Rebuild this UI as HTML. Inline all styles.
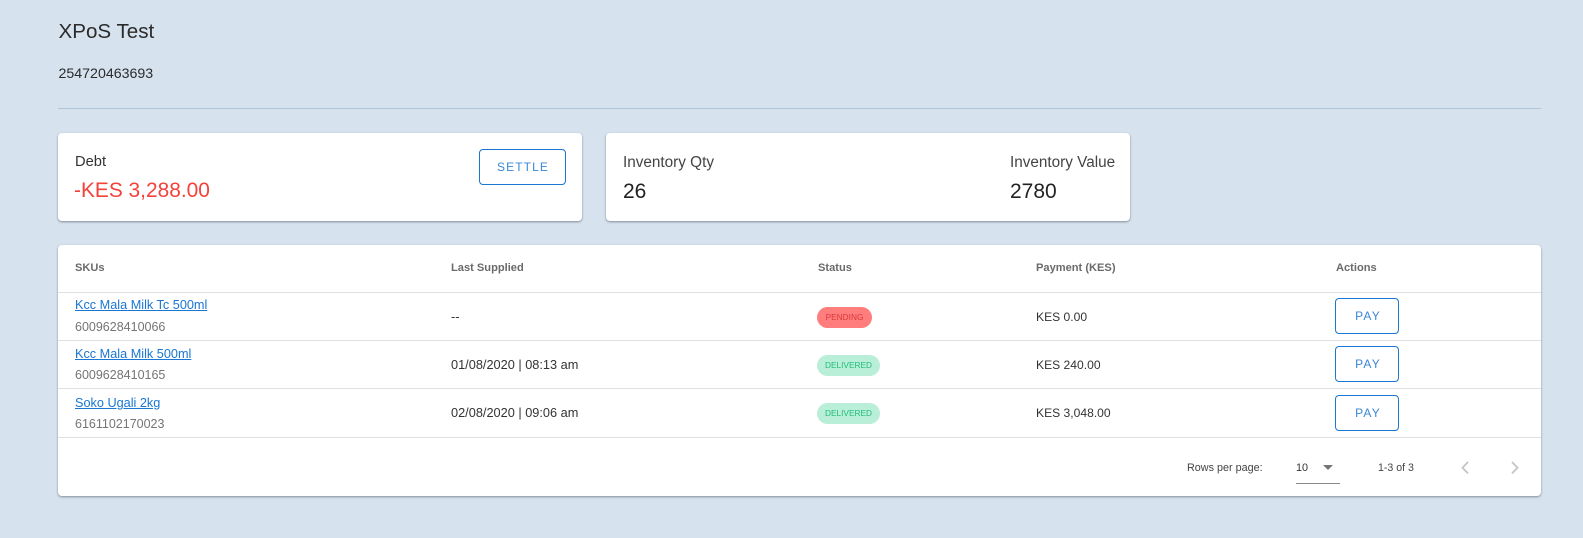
<!DOCTYPE html>
<html>
<head>
<meta charset="utf-8">
<style>
html,body{margin:0;padding:0;width:1583px;height:538px;overflow:hidden;background:#d6e2ee;font-family:"Liberation Sans",sans-serif;}
.t{position:absolute;white-space:nowrap;line-height:1;}
.card{position:absolute;background:#fff;border-radius:4px;box-shadow:0 1px 2px rgba(60,70,85,.55);}
.btn{position:absolute;box-sizing:border-box;border:1px solid #1976d2;border-radius:4px;color:#3a87d6;font-size:12px;letter-spacing:1.2px;text-align:center;background:#fff;}
.hr{position:absolute;left:58px;width:1483px;height:1px;background:#e0e0e0;}
.h{font-size:11.1px;font-weight:bold;color:#6a6a6a;top:263px;}
.lnk{font-size:12.7px;color:#1976d2;text-decoration:underline;left:75px;}
.sku{font-size:12.5px;color:#757575;left:75px;}
.c{font-size:12.75px;color:#333;}
.k{font-size:12.1px;color:#333;left:1036px;}
.pill{position:absolute;left:817px;height:21px;border-radius:11px;font-size:8.3px;line-height:21px;text-align:center;}
.g{width:63px;background:#b9eed8;color:#1fbf7a;}
.r{width:55px;background:#ff7d7d;color:#d93a3a;}
.pb{left:1335px;width:64px;height:36px;line-height:34px;padding-left:2px;}
</style>
</head>
<body>
<div class="t" style="left:58.500px;top:22px;font-size:20.600px;color:#2b2b2b;">XPoS Test</div>
<div class="t" style="left:58.500px;top:67px;font-size:14.200px;color:#2b2b2b;">254720463693</div>
<div style="position:absolute;left:58px;top:108px;width:1483px;height:1px;background:#afc5da;"></div>

<div class="card" style="left:58px;top:133px;width:524px;height:88px;"></div>
<div class="t" style="left:75px;top:155px;font-size:14.700px;color:#333;">Debt</div>
<div class="t" style="left:74px;top:181px;font-size:20.900px;color:#f4423a;">-KES 3,288.00</div>
<div class="btn" style="left:479px;top:149px;width:87px;height:36px;line-height:34px;letter-spacing:1.100px;padding-left:1px;">SETTLE</div>

<div class="card" style="left:606px;top:133px;width:524px;height:88px;"></div>
<div class="t" style="left:623px;top:155px;font-size:15.300px;color:#444;">Inventory Qty</div>
<div class="t" style="left:623px;top:181px;font-size:21px;color:#222;">26</div>
<div class="t" style="left:1010px;top:155px;font-size:15.300px;color:#444;">Inventory Value</div>
<div class="t" style="left:1010px;top:181px;font-size:21px;color:#222;">2780</div>

<div class="card" style="left:58px;top:245px;width:1483px;height:251px;"></div>
<div class="t h" style="left:75px;">SKUs</div>
<div class="t h" style="left:451px;">Last Supplied</div>
<div class="t h" style="left:818px;">Status</div>
<div class="t h" style="left:1036px;">Payment (KES)</div>
<div class="t h" style="left:1336px;">Actions</div>
<div class="hr" style="top:292px;"></div>
<div class="hr" style="top:340px;"></div>
<div class="hr" style="top:388px;"></div>
<div class="hr" style="top:437px;"></div>

<div class="t lnk" style="top:299px;">Kcc Mala Milk Tc 500ml</div>
<div class="t sku" style="top:321px;">6009628410066</div>
<div class="t c" style="left:451px;top:311px;">--</div>
<div class="pill r" style="top:307px;">PENDING</div>
<div class="t k" style="top:311px;">KES 0.00</div>
<div class="btn pb" style="top:298px;">PAY</div>

<div class="t lnk" style="top:348px;">Kcc Mala Milk 500ml</div>
<div class="t sku" style="top:369px;">6009628410165</div>
<div class="t c" style="left:451px;top:359px;">01/08/2020 | 08:13 am</div>
<div class="pill g" style="top:355px;">DELIVERED</div>
<div class="t k" style="top:359px;">KES 240.00</div>
<div class="btn pb" style="top:346px;">PAY</div>

<div class="t lnk" style="top:397px;">Soko Ugali 2kg</div>
<div class="t sku" style="top:418px;">6161102170023</div>
<div class="t c" style="left:451px;top:407px;">02/08/2020 | 09:06 am</div>
<div class="pill g" style="top:403px;">DELIVERED</div>
<div class="t k" style="top:407px;">KES 3,048.00</div>
<div class="btn pb" style="top:395px;">PAY</div>

<div class="t" style="left:1187px;top:463px;font-size:10.800px;color:#444;">Rows per page:</div>
<div class="t" style="left:1296px;top:463px;font-size:10.800px;color:#333;">10</div>
<svg style="position:absolute;left:1322px;top:464px;" width="12" height="7"><path d="M1 1h10L6 6z" fill="#757575"/></svg>
<div style="position:absolute;left:1296px;top:483px;width:44px;height:1px;background:#8a8a8a;"></div>
<div class="t" style="left:1378px;top:463px;font-size:10.600px;color:#444;">1-3 of 3</div>
<svg style="position:absolute;left:1455px;top:455px;" width="70" height="26" fill="none" stroke="#c4c4c4" stroke-width="1.8"><path d="M13 7l-5.500 5.700 5.500 5.700"/><path d="M57 7l5.500 5.700-5.500 5.700"/></svg>
</body>
</html>
